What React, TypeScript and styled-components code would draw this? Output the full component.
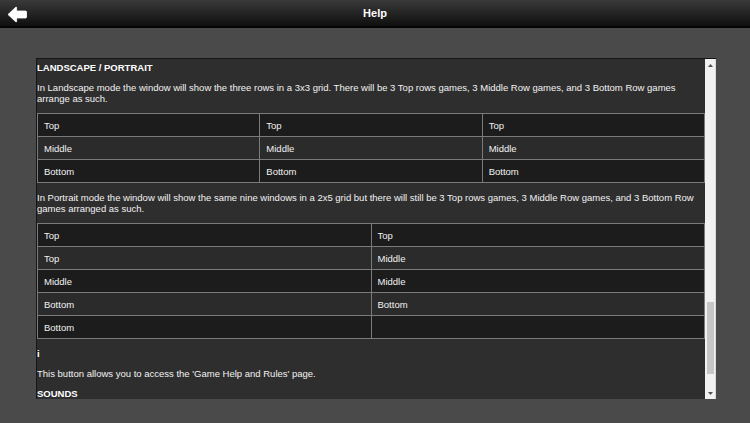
import React from "react";
import styled, { createGlobalStyle } from "styled-components";

const GlobalStyle = createGlobalStyle`
  html, body { margin: 0; padding: 0; }
  body {
    background: #4a4a4a;
    font-family: "Liberation Sans", Arial, sans-serif;
    color: #fff;
    width: 750px;
    height: 423px;
    overflow: hidden;
  }
`;

const Header = styled.header`
  height: 26px;
  border-bottom: 2px solid #050505;
  background: linear-gradient(#3a3a3a, #0f0f0f);
  display: flex;
  align-items: center;
  justify-content: center;
  position: relative;
`;

const BackButton = styled.button`
  position: absolute;
  left: 6px;
  top: 5px;
  width: 22px;
  height: 18px;
  padding: 0;
  border: 0;
  background: transparent;
  display: flex;
  align-items: center;
  justify-content: center;
`;

const Title = styled.h1`
  margin: 0;
  font-size: 11px;
  font-weight: bold;
  color: #fff;
`;

const Main = styled.main`
  padding: 30px 34px 0 36px;
`;

const Panel = styled.section`
  height: 340px;
  display: flex;
  border-top: 1px solid #161616;
  border-left: 1px solid #161616;
  background: #2e2e2e;
`;

const Content = styled.div`
  flex: 1;
  overflow: hidden;
  padding-top: 3px;
`;

const Heading = styled.h2`
  margin: 0 0 9px;
  font-size: 9.5px;
  line-height: 11px;
  font-weight: bold;
  color: #fff;
`;

const Para = styled.p`
  margin: 0 0 9px;
  font-size: 9.5px;
  line-height: 11px;
  color: #f2f2f2;
`;

const Table = styled.table`
  width: 100%;
  border-collapse: collapse;
  margin: 0 0 9px;
  table-layout: fixed;
`;

const Row = styled.tr<{ $dark: boolean }>`
  background: ${(p) => (p.$dark ? "#1c1c1c" : "#2b2b2b")};
`;

const Cell = styled.td`
  border: 1px solid #7a7a7a;
  height: 23px;
  padding: 0 6px;
  font-size: 9.5px;
  color: #f2f2f2;
  box-sizing: border-box;
`;

const Scrollbar = styled.div`
  width: 10px;
  background: #f1f1f1;
  display: flex;
  flex-direction: column;
  border-right: 1px solid #d8d8d8;
`;

const ArrowBtn = styled.div`
  height: 12px;
  display: flex;
  align-items: center;
  justify-content: center;
`;

const Track = styled.div`
  flex: 1;
`;

const Thumb = styled.div`
  width: 7px;
  margin-left: 1.5px;
  height: 72px;
  background: #c6c6c6;
`;

const Arrow = ({ up }: { up: boolean }) => (
  <svg width="5" height="3" viewBox="0 0 5 3">
    <polygon points={up ? "0,3 5,3 2.5,0" : "0,0 5,0 2.5,3"} fill="#505050" />
  </svg>
);

const landscape = [
  ["Top", "Top", "Top"],
  ["Middle", "Middle", "Middle"],
  ["Bottom", "Bottom", "Bottom"],
];

const portrait = [
  ["Top", "Top"],
  ["Top", "Middle"],
  ["Middle", "Middle"],
  ["Bottom", "Bottom"],
  ["Bottom", ""],
];

const Grid = ({ rows }: { rows: string[][] }) => (
  <Table>
    <tbody>
      {rows.map((r, i) => (
        <Row key={i} $dark={i % 2 === 0}>
          {r.map((c, j) => (
            <Cell key={j}>{c}</Cell>
          ))}
        </Row>
      ))}
    </tbody>
  </Table>
);

export default function App() {
  return (
    <>
      <GlobalStyle />
      <Header>
        <BackButton aria-label="Back">
          <svg width="20" height="17" viewBox="0 0 20 17">
            <path
              d="M1 8.5 L9 1 L9.6 1.3 L9.6 5 L19 5 L19.5 5.5 L19.5 11.5 L19 12 L9.6 12 L9.6 15.7 L9 16 Z"
              fill="#fff"
              stroke="#fff"
              strokeWidth="0.8"
              strokeLinejoin="round"
            />
          </svg>
        </BackButton>
        <Title>Help</Title>
      </Header>
      <Main>
        <Panel>
          <Content>
            <Heading>LANDSCAPE / PORTRAIT</Heading>
            <Para>
              In Landscape mode the window will show the three rows in a 3x3 grid. There will be 3 Top rows games, 3
              Middle Row games, and 3 Bottom Row games arrange as such.
            </Para>
            <Grid rows={landscape} />
            <Para>
              In Portrait mode the window will show the same nine windows in a 2x5 grid but there will still be 3 Top
              rows games, 3 Middle Row games, and 3 Bottom Row games arranged as such.
            </Para>
            <Grid rows={portrait} />
            <Heading>i</Heading>
            <Para>This button allows you to access the 'Game Help and Rules' page.</Para>
            <Heading>SOUNDS</Heading>
          </Content>
          <Scrollbar>
            <ArrowBtn>
              <Arrow up />
            </ArrowBtn>
            <Track>
              <Thumb style={{ marginTop: 231 }} />
            </Track>
            <ArrowBtn>
              <Arrow up={false} />
            </ArrowBtn>
          </Scrollbar>
        </Panel>
      </Main>
    </>
  );
}
